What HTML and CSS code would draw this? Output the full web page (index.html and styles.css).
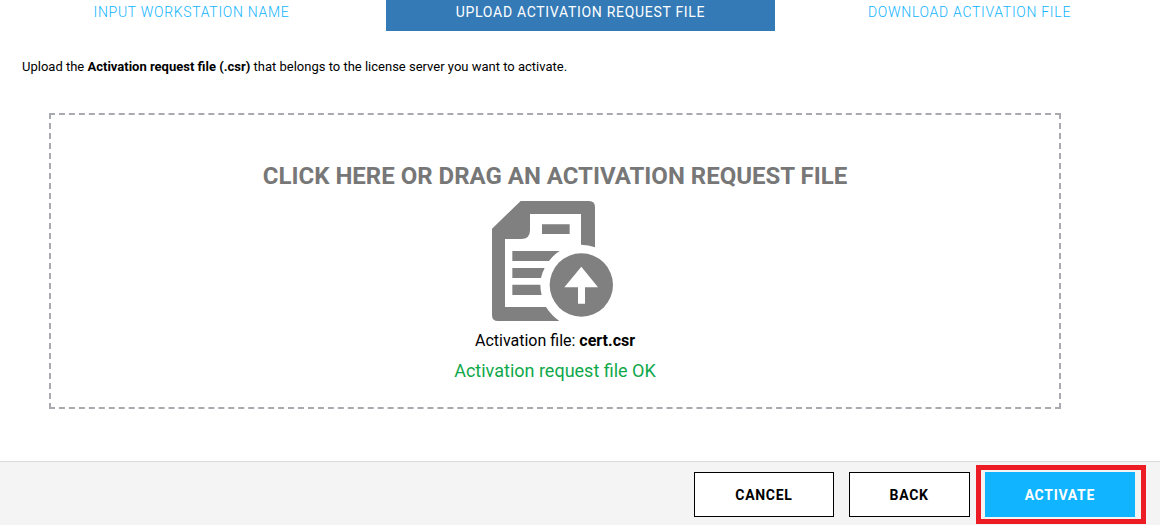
FILE: index.html
```html
<!DOCTYPE html>
<html lang="en">
<head>
    <meta charset="UTF-8">
    <meta name="viewport" content="width=device-width, initial-scale=1.0">
    <title>License activation</title>
    <link rel="stylesheet" href="styles.css">
</head>
<body>
    <nav class="steps">
        <a class="step" href="#name">Input workstation name</a>
        <a class="step active" href="#upload">Upload activation request file</a>
        <a class="step" href="#download">Download activation file</a>
    </nav>

    <main class="content">
        <p class="intro">Upload the <b>Activation request file (.csr)</b> that belongs to the license server you want to activate.</p>

        <label class="dropzone" for="requestFile">
            <span class="dropzone-title">CLICK HERE OR DRAG AN ACTIVATION REQUEST FILE</span>
            <svg class="dropzone-icon" viewBox="0 0 363 360" aria-hidden="true">
                <path fill="#808080" d="M86 0H291Q309 0 309 18V139Q290 131 267 131V39H114V88Q114 114 88 114H39V318H162Q177 342 202 360H18Q0 360 0 342V83Z"/>
                <path fill="#808080" d="M150 70H233V99H150ZM61 150H203Q184 162 171 180H61ZM61 201H158Q150 216 147 231H61ZM61 251H145Q145 266 149 282H61Z"/>
                <circle fill="#808080" cx="268" cy="252" r="95"/>
                <path fill="#fff" d="M268 197L318 259H279V308H258V259H217Z"/>
            </svg>
            <span class="file-name">Activation file: <b>cert.csr</b></span>
            <span class="file-status">Activation request file OK</span>
            <input class="file-input" type="file" id="requestFile" accept=".csr">
        </label>
    </main>

    <footer class="actions">
        <button class="btn" type="button">CANCEL</button>
        <button class="btn" type="button">BACK</button>
        <div class="highlight">
            <button class="btn btn-primary" type="button">ACTIVATE</button>
        </div>
    </footer>
</body>
</html>
```
FILE: styles.css
```css
* {
    box-sizing: border-box;
}
body {
    margin: 0;
    min-height: 100vh;
    display: flex;
    flex-direction: column;
    overflow-x: hidden;
    font-family: Roboto, "Liberation Sans", sans-serif;
    font-size: 13px;
    color: #000;
    background: #fff;
}
.steps {
    display: grid;
    grid-template-columns: repeat(3, 1fr);
    margin: 0 -4px 0 -3px;
}
.step {
    padding: 2px 0 9px;
    font-size: 14px;
    font-weight: 300;
    line-height: 20px;
    letter-spacing: 0.05em;
    text-align: center;
    text-decoration: none;
    text-transform: uppercase;
    color: #10b4ff;
}
.step.active {
    font-weight: 400;
    color: #fff;
    background: #337ab7;
}
.content {
    flex: 1;
    padding: 26px 99px 52px 22px;
}
.intro {
    margin: 0 0 36px;
    line-height: 20px;
}
.dropzone {
    display: flex;
    flex-direction: column;
    align-items: center;
    margin-left: 27px;
    padding: 46px 20px 21px;
    border: 2px dashed #a9a9b0;
    cursor: pointer;
}
.dropzone-title {
    font-size: 24px;
    font-weight: 700;
    line-height: 30px;
    color: #777;
}
.dropzone-icon {
    width: 121px;
    height: 120px;
    margin: 10px 5px 5px 0;
}
.file-name {
    font-size: 16px;
    line-height: 30px;
}
.file-status {
    font-size: 18px;
    line-height: 30px;
    color: #0fa84a;
}
.file-input {
    position: absolute;
    width: 1px;
    height: 1px;
    opacity: 0;
}
.actions {
    display: flex;
    justify-content: flex-end;
    align-items: center;
    gap: 15px;
    padding: 3px 14px 1px;
    border-top: 1px solid #d9dbdb;
    background: #f4f4f4;
}
.btn {
    height: 45px;
    padding: 0 40px;
    border: 1px solid #000;
    font-family: inherit;
    font-size: 14px;
    font-weight: 700;
    letter-spacing: 0.05em;
    color: #000;
    background: #fff;
    cursor: pointer;
}
.btn-primary {
    border: 0;
    color: #fff;
    background: #10b4ff;
}
.highlight {
    display: flex;
    margin-left: -9px;
    padding: 2px 6px 2px 4px;
    border: 5px solid #ed1c24;
}
```
